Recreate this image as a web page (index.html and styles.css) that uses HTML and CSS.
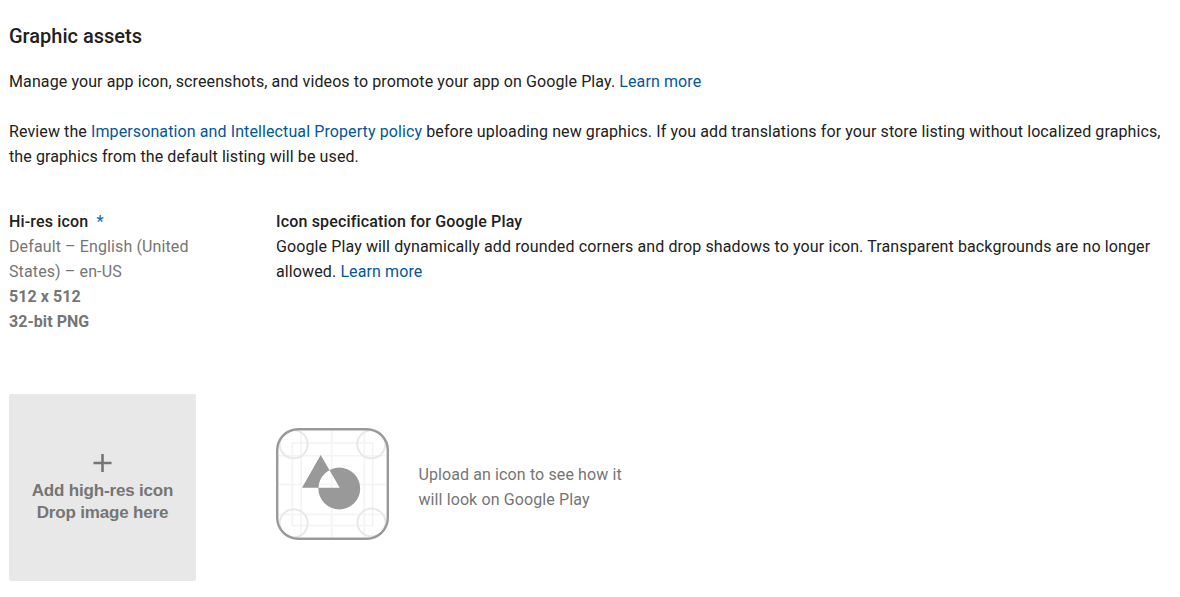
FILE: index.html
```html
<!DOCTYPE html>
<html lang="en">
<head>
<meta charset="utf-8">
<title>Graphic assets</title>
<link rel="stylesheet" href="styles.css">
</head>
<body>
<main class="page">
  <h2 class="title">Graphic assets</h2>
  <p class="intro">Manage your app icon, screenshots, and videos to promote your app on Google Play. <a class="link">Learn more</a></p>
  <p class="policy">Review the <a class="link">Impersonation and Intellectual Property policy</a> before uploading new graphics. If you add translations for your store listing without localized graphics,<br>the graphics from the default listing will be used.</p>
  <section class="row specs">
    <div class="label">
      <div class="strong">Hi-res icon <span class="required">*</span></div>
      <div class="muted">Default – English (United<br>States) – en-US</div>
      <div class="muted heavy">512 x 512<br>32-bit PNG</div>
    </div>
    <div class="description">
      <div class="strong">Icon specification for Google Play</div>
      <div>Google Play will dynamically add rounded corners and drop shadows to your icon. Transparent backgrounds are no longer<br>allowed. <a class="link">Learn more</a></div>
    </div>
  </section>
  <section class="row upload">
    <div class="dropzone">
      <svg class="plus" width="19" height="18" viewBox="0 0 19 18"><path d="M9.500 0v18M.500 9h18" stroke="#757575" stroke-width="2.600"/></svg>
      <div>Add high-res icon</div>
      <div>Drop image here</div>
    </div>
    <div class="preview">
      <svg class="preview-icon" width="113" height="112" viewBox="0 0 113 112" fill="none">
        <g stroke="#f3f3f3" stroke-width="1.6">
          <path d="M25.200 3v106M55.700 3v106M88.300 3v106M3 27.700h107M3 56.500h107M3 86.500h107"/>
          <rect x="16.300" y="15" width="80.400" height="82.500"/>
        </g>
        <g stroke="#e8e8e8" stroke-width="2">
          <circle cx="17.700" cy="16.300" r="14"/><circle cx="95.300" cy="16.300" r="14"/><circle cx="17.700" cy="95.300" r="14"/><circle cx="95.500" cy="94.500" r="14"/>
        </g>
        <rect x="1.200" y="1.200" width="110.600" height="109.600" rx="21" stroke="#999" stroke-width="2.400"/>
        <path fill-rule="evenodd" d="M84.200 60.500A20.900 20.900 0 1 1 42.400 60.500A20.900 20.900 0 1 1 84.200 60.500ZM44.700 27L63.700 59.800H26Z" fill="#999"/>
      </svg>
      <p class="hint">Upload an icon to see how it<br>will look on Google Play</p>
    </div>
  </section>
</main>
</body>
</html>
```
FILE: styles.css
```css
body { margin: 0; background: #fff; color: #212121; font: 16px/25px Roboto, sans-serif; letter-spacing: .115px; }
.page { padding: 23px 0 0 9px; white-space: nowrap; }
.title { margin: 0; font-size: 20px; line-height: 26px; font-weight: 500; letter-spacing: 0; }
.intro { margin: 20px 0 25px; letter-spacing: .105px; }
.policy { margin: 0; letter-spacing: .105px; }
.link { color: #01579b; }
.row { display: grid; grid-template-columns: 187px 1fr; column-gap: 80px; }
.specs { margin-top: 40px; }
.strong { font-weight: 500; letter-spacing: .16px; }
.required { margin-left: 4px; color: #0b6bbd; }
.muted { color: #757575; }
.heavy { font-weight: 700; letter-spacing: .05px; }
.upload { margin-top: 60px; }
.dropzone { height: 187px; box-sizing: border-box; padding-top: 60px; background: #e8e8e8; color: #757575; text-align: center; font: 700 17px/22px "Liberation Sans", Arial, sans-serif; letter-spacing: -.17px; border-radius: 2px; }
.plus { display: block; margin: 0 auto 8px; }
.preview { display: flex; align-items: center; gap: 29.4px; height: 187px; color: #757575; }
.preview-icon { display: block; margin-top: -7px; }
.hint { margin: -2px 0 0; }
```
